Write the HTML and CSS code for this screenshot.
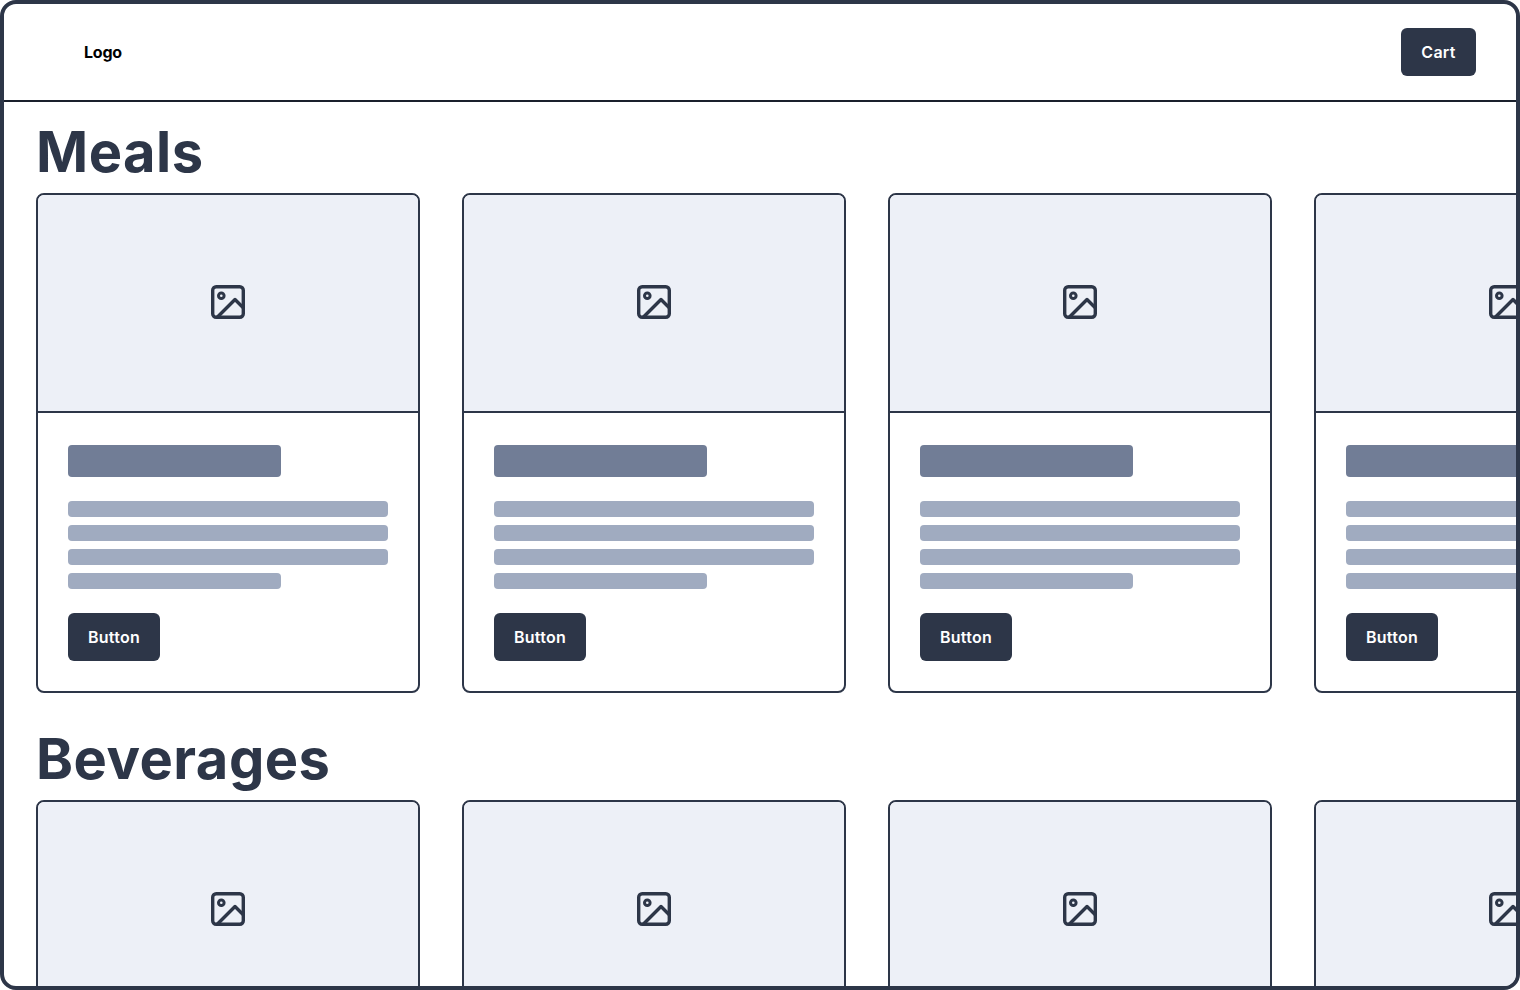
FILE: index.html
```html
<!DOCTYPE html>
<html lang="en">
<head>
  <meta charset="UTF-8">
  <title>Menu</title>
  <link rel="stylesheet" href="styles.css">
</head>
<body>
  <svg class="icon-defs" aria-hidden="true">
    <symbol id="image-icon" viewBox="0 0 34 34">
      <rect x="1.7" y="1.7" width="30.6" height="30.6" rx="3.5" fill="none" stroke="currentColor" stroke-width="3.4"/>
      <circle cx="10.3" cy="10.7" r="2.8" fill="none" stroke="currentColor" stroke-width="3"/>
      <path d="M6 32.5 L24 14.5 L32.5 23" fill="none" stroke="currentColor" stroke-width="3.4" stroke-linejoin="round"/>
    </symbol>
  </svg>

  <div class="frame">
    <header class="topbar">
      <div class="logo">Logo</div>
      <button class="btn btn-cart">Cart</button>
    </header>

    <section class="category">
      <h1>Meals</h1>
      <div class="row">
        <article class="card">
          <div class="thumb"><svg class="thumb-icon"><use href="#image-icon"/></svg></div>
          <div class="card-body">
            <div class="title-bar"></div>
            <div class="lines">
              <div class="line"></div>
              <div class="line"></div>
              <div class="line"></div>
              <div class="line short"></div>
            </div>
            <button class="btn">Button</button>
          </div>
        </article>
        <article class="card">
          <div class="thumb"><svg class="thumb-icon"><use href="#image-icon"/></svg></div>
          <div class="card-body">
            <div class="title-bar"></div>
            <div class="lines">
              <div class="line"></div>
              <div class="line"></div>
              <div class="line"></div>
              <div class="line short"></div>
            </div>
            <button class="btn">Button</button>
          </div>
        </article>
        <article class="card">
          <div class="thumb"><svg class="thumb-icon"><use href="#image-icon"/></svg></div>
          <div class="card-body">
            <div class="title-bar"></div>
            <div class="lines">
              <div class="line"></div>
              <div class="line"></div>
              <div class="line"></div>
              <div class="line short"></div>
            </div>
            <button class="btn">Button</button>
          </div>
        </article>
        <article class="card">
          <div class="thumb"><svg class="thumb-icon"><use href="#image-icon"/></svg></div>
          <div class="card-body">
            <div class="title-bar"></div>
            <div class="lines">
              <div class="line"></div>
              <div class="line"></div>
              <div class="line"></div>
              <div class="line short"></div>
            </div>
            <button class="btn">Button</button>
          </div>
        </article>
      </div>
    </section>

    <section class="category">
      <h1>Beverages</h1>
      <div class="row">
        <article class="card">
          <div class="thumb"><svg class="thumb-icon"><use href="#image-icon"/></svg></div>
        </article>
        <article class="card">
          <div class="thumb"><svg class="thumb-icon"><use href="#image-icon"/></svg></div>
        </article>
        <article class="card">
          <div class="thumb"><svg class="thumb-icon"><use href="#image-icon"/></svg></div>
        </article>
        <article class="card">
          <div class="thumb"><svg class="thumb-icon"><use href="#image-icon"/></svg></div>
        </article>
      </div>
    </section>
  </div>
</body>
</html>
```

FILE: styles.css
```css
* {
  box-sizing: border-box;
}

html, body {
  height: 100%;
}

body {
  margin: 0;
  font-family: 'Inter', sans-serif;
  background: #fff;
  overflow: hidden;
}

.icon-defs {
  display: none;
}

.frame {
  width: 1520px;
  height: 990px;
  border: 4px solid #2d3648;
  border-radius: 16px;
  overflow: hidden;
  background: #fff;
}

.topbar {
  display: flex;
  justify-content: space-between;
  align-items: center;
  height: 98px;
  padding: 0 40px 0 80px;
  border-bottom: 2px solid #1a202c;
}

.logo {
  font-size: 16px;
  font-weight: 700;
  letter-spacing: -0.2px;
  color: #000;
}

.btn {
  height: 48px;
  padding: 0 20px;
  border: none;
  border-radius: 6px;
  background: #2d3648;
  color: #fff;
  font-family: inherit;
  font-size: 16px;
  font-weight: 600;
  letter-spacing: 0.25px;
}

.btn-cart {
  width: 75px;
  padding: 0;
}

.category {
  padding: 17px 32px 16px;
}

h1 {
  margin: 0 0 7px;
  font-size: 56px;
  font-weight: 700;
  line-height: 67px;
  letter-spacing: 0.5px;
  color: #2d3648;
}

.row {
  display: flex;
  gap: 42px;
}

.card {
  flex: none;
  width: 384px;
  border: 2px solid #2d3648;
  border-radius: 8px;
  overflow: hidden;
  background: #fff;
}

.thumb {
  display: flex;
  justify-content: center;
  align-items: center;
  height: 218px;
  padding-bottom: 2px;
  border-bottom: 2px solid #2d3648;
  background: #edf0f7;
  color: #2d3648;
}

.thumb-icon {
  width: 34px;
  height: 34px;
}

.card-body {
  padding: 32px 30px 30px;
}

.title-bar {
  width: 213px;
  height: 32px;
  border-radius: 4px;
  background: #717d96;
}

.lines {
  display: flex;
  flex-direction: column;
  gap: 8px;
  margin: 24px 0;
}

.line {
  width: 320px;
  height: 16px;
  border-radius: 4px;
  background: #a0abc0;
}

.line.short {
  width: 213px;
}
```
